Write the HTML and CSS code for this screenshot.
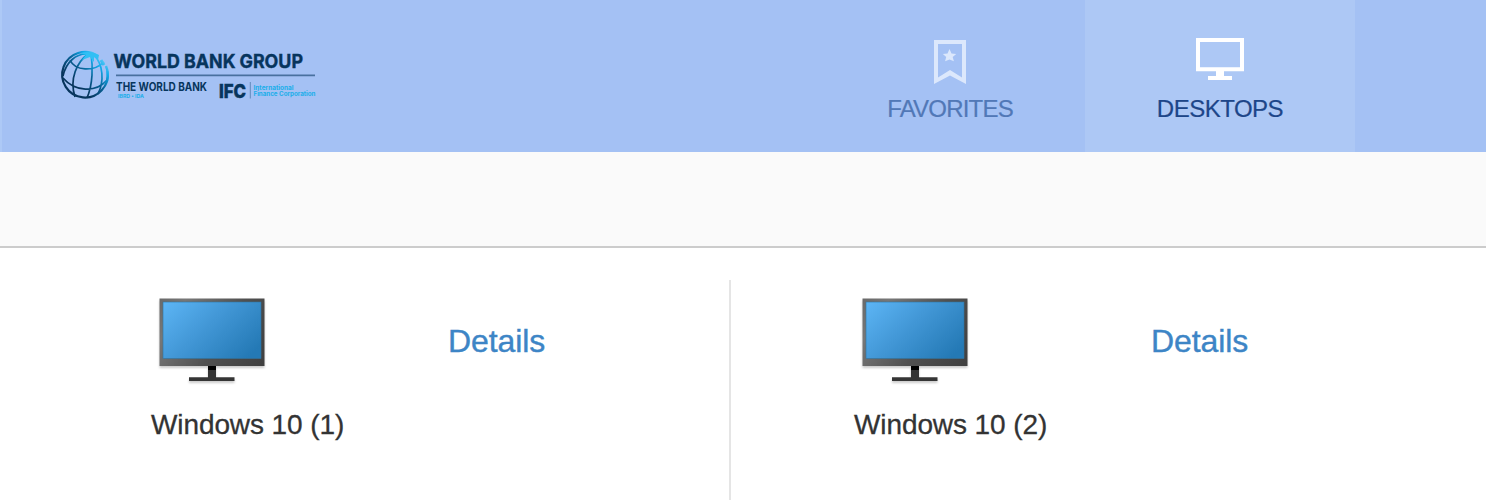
FILE: index.html
```html
<!DOCTYPE html>
<html lang="en">
<head>
<meta charset="utf-8">
<title>Desktops</title>
<link rel="stylesheet" href="styles.css">
</head>
<body>
<header class="header">
  <svg class="logo" width="260" height="56" viewBox="58 47 260 56" role="img" aria-label="World Bank Group">
    <defs>
      <linearGradient id="globe" x1="66" y1="99" x2="107" y2="56" gradientUnits="userSpaceOnUse">
        <stop offset=".3" stop-color="#07355d"/><stop offset=".55" stop-color="#075f92"/><stop offset=".78" stop-color="#10aaea"/><stop offset="1" stop-color="#83dcff"/>
      </linearGradient>
    </defs>
    <g fill="none" stroke="url(#globe)" stroke-width="1.7">
      <path d="M98 56A22.800 22.800 0 1 0 107.500 71" stroke-width="2.2"/>
      <path d="M88 54C77 62 69 79 75 97M91 54C93 66 93 84 87 98M93 54C104 64 104 82 98 94M86 54C76 54 66 62 63 76M70 60C75 71 94 72 104 62M63 78C75 92 96 93 107 80"/>
      <path d="M106 66Q109 73 107 81" stroke-width="2.4"/>
      <path d="M101 60L104 65" stroke-width="3"/>
    </g>
    <path d="M80 53Q91 50 99 55L98 60L94 57V62L90 57L82 60L86 55Z" fill="#31bff4"/>
    <g class="logo-navy">
      <text class="logo-title" x="113.500" y="67.800" font-size="19" textLength="122" lengthAdjust="spacingAndGlyphs">WORLD BANK</text>
      <text class="logo-title" x="239.500" y="67.800" font-size="19" textLength="63.500" lengthAdjust="spacingAndGlyphs">GROUP</text>
      <text x="116" y="91.300" font-size="11.500" textLength="91" lengthAdjust="spacingAndGlyphs">THE WORLD BANK</text>
      <text class="logo-ifc" x="219" y="97.500" font-size="19" textLength="27" lengthAdjust="spacingAndGlyphs">IFC</text>
    </g>
    <path d="M116 75.300H315" stroke="#49719f" stroke-width="1.7"/>
    <path d="M250.300 82V98.500" stroke="#6189bb"/>
    <g class="logo-cyan">
      <text x="118" y="97.600" font-size="5" textLength="26" lengthAdjust="spacingAndGlyphs">IBRD • IDA</text>
      <text x="253.500" y="90" font-size="6" textLength="40" lengthAdjust="spacingAndGlyphs">International</text>
      <text x="253.500" y="95.800" font-size="6" textLength="62" lengthAdjust="spacingAndGlyphs">Finance Corporation</text>
    </g>
  </svg>
  <nav class="tabs">
    <a class="tab tab-favorites">
      <svg class="tab-icon" width="48" height="48" viewBox="0 0 48 48">
        <path d="M8 2H40V46L24 37.500L8 46ZM12 6V39.500L24 32L36 39.500V6Z" fill="#dce8fc" fill-rule="evenodd"/>
        <path d="M23.500 11L25.500 15.400L30.200 15.900L26.700 19.100L27.900 23.300L23.500 21.600L19.100 23.300L20.200 19.100L16.900 15.900L21.500 15.400Z" fill="#dce8fc"/>
      </svg>
      <span>FAVORITES</span>
    </a>
    <a class="tab tab-active">
      <svg class="tab-icon" width="48" height="48" viewBox="0 0 48 48">
        <path d="M2 2H46V31.200H2Z" fill="none" stroke="#fff" stroke-width="4"/>
        <path d="M20 33H28V38H36V42H12V38H20Z" fill="#fff"/>
      </svg>
      <span>DESKTOPS</span>
    </a>
  </nav>
</header>
<div class="toolbar"></div>
<main class="desktops">
  <svg class="symbols" width="0" height="0">
    <defs>
      <linearGradient id="frame" x1="0" y1="0" x2="105" y2="67" gradientUnits="userSpaceOnUse"><stop stop-color="#686868"/><stop offset=".2" stop-color="#777"/><stop offset=".6" stop-color="#505050"/><stop offset="1" stop-color="#404040"/></linearGradient>
      <linearGradient id="screen" x1="10" y1="-5" x2="80" y2="70" gradientUnits="userSpaceOnUse"><stop stop-color="#5fb8f8"/><stop offset=".5" stop-color="#4297d6"/><stop offset="1" stop-color="#2479b5"/></linearGradient>
      <symbol id="monitor" viewBox="0 0 108 88">
        <rect x="1.500" y="1.500" width="105" height="67.500" fill="url(#frame)"/>
        <rect x="5" y="5" width="98" height="56.500" fill="url(#screen)" stroke="#31749f" stroke-width=".6"/>
        <path d="M50 69H58V80.200H76.500V84H31V80.200H50Z" fill="#353535"/>
        <path d="M50 69H58V73H50Z" fill="#000"/>
      </symbol>
    </defs>
  </svg>
  <section class="desktop">
    <svg class="monitor" width="108" height="88"><use href="#monitor"/></svg>
    <a class="details">Details</a>
    <div class="name">Windows 10 (1)</div>
  </section>
  <section class="desktop">
    <svg class="monitor" width="108" height="88"><use href="#monitor"/></svg>
    <a class="details">Details</a>
    <div class="name">Windows 10 (2)</div>
  </section>
</main>
</body>
</html>
```
FILE: styles.css
```css
* { box-sizing: border-box; }
body {
  margin: 0;
  height: 500px;
  overflow: hidden;
  background: #fff;
  font-family: "Liberation Sans", Arial, sans-serif;
}
.header {
  display: flex;
  justify-content: space-between;
  height: 152px;
  padding: 0 131px 0 56px;
  background: #a4c1f4;
  border-left: 2px solid #adc9f6;
}
.logo { margin-top: 47px; }
.logo-navy { fill: #07355d; font-family: Inter, sans-serif; font-weight: 700; }
.logo-title { stroke: #07355d; stroke-width: .4px; }
.logo-ifc { font-weight: 800; stroke: #07355d; stroke-width: .5px; }
.logo-cyan { fill: #1aaeea; font-family: Inter, sans-serif; font-weight: 700; }
.tabs { display: flex; }
.tab {
  display: flex;
  flex-direction: column;
  align-items: center;
  width: 270px;
  padding-top: 38px;
  color: #5178b7;
  font-size: 24px;
  line-height: 28px;
  letter-spacing: -.800px;
  -webkit-text-stroke: .2px;
}
.tab-icon { margin-bottom: 9px; }
.tab-active { background: #adc8f5; color: #1d4689; letter-spacing: -.500px; }
.toolbar { height: 96px; background: #fafafa; border-bottom: 2px solid #ccc; }
.desktops { display: flex; padding-top: 32px; }
.symbols { position: absolute; }
.desktop {
  display: grid;
  grid-template-columns: 290px auto;
  grid-template-rows: 112px auto;
  align-content: start;
  width: 731px;
  height: 220px;
  padding: 17px 0 0 158px;
  border-right: 2px solid #e5e5e5;
}
.desktop + .desktop { width: 755px; padding-left: 130px; border-right: 0; }
.monitor { filter: drop-shadow(0 2px 1px #0003); }
.details {
  padding-top: 26px;
  color: #3d85c6;
  font-size: 32px;
  line-height: 37px;
  letter-spacing: -.1px;
  -webkit-text-stroke: .4px;
}
.name {
  margin-left: -7px;
  color: #333;
  font-size: 28px;
  line-height: 32px;
  white-space: nowrap;
  letter-spacing: -.1px;
  -webkit-text-stroke: .3px;
}
```
